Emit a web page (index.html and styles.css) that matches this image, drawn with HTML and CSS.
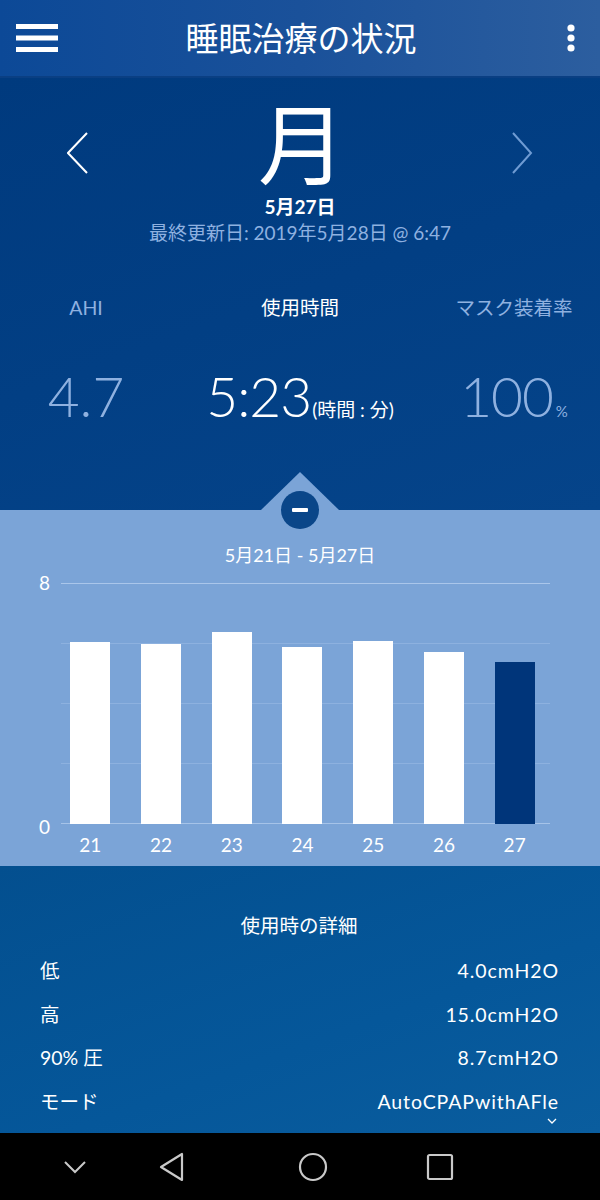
FILE: index.html
```html
<!DOCTYPE html>
<html lang="ja">
<head>
<meta charset="utf-8">
<title>睡眠治療の状況</title>
<link rel="stylesheet" href="styles.css">
</head>
<body>
<div class="screen">
  <header class="appbar">
    <svg class="menu" width="42" height="29" viewBox="0 0 42 29"><rect x="0" y="0" width="42" height="5" fill="#fff"/><rect x="0" y="11.5" width="42" height="5" fill="#fff"/><rect x="0" y="23" width="42" height="5" fill="#fff"/></svg>
    <h1 class="title">睡眠治療の状況</h1>
    <svg class="kebab" width="10" height="28" viewBox="0 0 10 28"><circle cx="5" cy="4" r="3.6" fill="#fff"/><circle cx="5" cy="14" r="3.6" fill="#fff"/><circle cx="5" cy="24" r="3.6" fill="#fff"/></svg>
  </header>

  <section class="summary">
    <div class="day-row">
      <svg class="chev" width="22" height="42" viewBox="0 0 22 42"><polyline points="20,1 1,21 20,41" fill="none" stroke="#ffffff" stroke-width="2"/></svg>
      <div class="day">月</div>
      <svg class="chev" width="22" height="42" viewBox="0 0 22 42"><polyline points="2,1 20,21 2,41" fill="none" stroke="#6f9bd3" stroke-width="2"/></svg>
    </div>
    <div class="date">5月27日</div>
    <div class="updated">最終更新日: 2019年5月28日 @ 6:47</div>

    <div class="stats">
      <div class="stat-label dim">AHI</div>
      <div class="stat-label">使用時間</div>
      <div class="stat-label dim">マスク装着率</div>
      <div class="stat-value dim">4.7</div>
      <div class="stat-value"><span class="big">5:23</span><span class="unit">(時間 : 分)</span></div>
      <div class="stat-value dim"><span class="big">100</span><span class="pct">%</span></div>
    </div>
  </section>

  <section class="weekly">
    <div class="collapse"><span class="dash"></span></div>
    <div class="range">5月21日 - 5月27日</div>
    <div class="chart">
      <div class="yaxis"><span>8</span><span>0</span></div>
      <div class="plot">
        <div class="bars">
          <div class="col"><div class="bar" style="height:182px"></div></div>
          <div class="col"><div class="bar" style="height:180px"></div></div>
          <div class="col"><div class="bar" style="height:192px"></div></div>
          <div class="col"><div class="bar" style="height:177px"></div></div>
          <div class="col"><div class="bar" style="height:183px"></div></div>
          <div class="col"><div class="bar" style="height:172px"></div></div>
          <div class="col"><div class="bar current" style="height:162px"></div></div>
        </div>
      </div>
    </div>
    <div class="xaxis">
      <span>21</span><span>22</span><span>23</span><span>24</span><span>25</span><span>26</span><span>27</span>
    </div>
  </section>

  <section class="details">
    <div class="details-title">使用時の詳細</div>
    <div class="row"><span>低</span><span class="val">4.0cmH2O</span></div>
    <div class="row"><span>高</span><span class="val">15.0cmH2O</span></div>
    <div class="row"><span>90% 圧</span><span class="val">8.7cmH2O</span></div>
    <div class="row"><span>モード</span><span class="val">AutoCPAPwithAFle</span></div>
    <div class="more"><svg width="10" height="6" viewBox="0 0 10 6"><polyline points="1,1 5,5 9,1" fill="none" stroke="#fff" stroke-width="1.3"/></svg></div>
  </section>

  <nav class="sysnav">
    <svg class="nv n1" width="24" height="14" viewBox="0 0 24 14"><polyline points="2,2 12,12 22,2" fill="none" stroke="#c9c9c9" stroke-width="2"/></svg>
    <svg class="nv n2" width="26" height="30" viewBox="0 0 26 30"><path d="M23,2 L23,28 L2,15 Z" fill="none" stroke="#c9c9c9" stroke-width="2.2" stroke-linejoin="round"/></svg>
    <svg class="nv n3" width="30" height="30" viewBox="0 0 30 30"><circle cx="15" cy="15" r="13" fill="none" stroke="#c9c9c9" stroke-width="2.2"/></svg>
    <svg class="nv n4" width="28" height="28" viewBox="0 0 28 28"><rect x="2" y="2" width="24" height="24" rx="1.5" fill="none" stroke="#c9c9c9" stroke-width="2.2"/></svg>
  </nav>
</div>
</body>
</html>
```

FILE: styles.css
```css
* { box-sizing: border-box; margin: 0; padding: 0; }

body {
  margin: 0;
  width: 600px;
  height: 1200px;
  overflow: hidden;
  font-family: "Lato", "Noto Sans CJK JP", sans-serif;
  color: #fff;
  background: #000;
}

.screen {
  width: 600px;
  height: 1200px;
  display: flex;
  flex-direction: column;
}

/* App bar */
.appbar {
  height: 78px;
  flex: none;
  display: flex;
  align-items: center;
  padding: 0 24px 0 16px;
  background: linear-gradient(90deg, #0c4997 0%, #1a519a 50%, #2c5e9f 100%);
  border-bottom: 2px solid #0a3f83;
}
.menu { flex: none; }
.title {
  flex: 1;
  text-align: center;
  font-family: "Noto Sans CJK JP", sans-serif;
  font-weight: 400;
  font-size: 33px;
  line-height: 40px;
  margin-right: 22px;
  margin-top: -3px;
}
.kebab { flex: none; }

/* Summary */
.summary {
  height: 432px;
  flex: none;
  background: linear-gradient(160deg, #003a7e 0%, #023f84 50%, #05448a 100%);
  padding-top: 11px;
  text-align: center;
}
.day-row {
  height: 100px;
  display: flex;
  align-items: center;
  justify-content: space-between;
  padding: 0 67px 0 67px;
}
.chev { flex: none; margin-top: 28px; }
.day {
  font-family: "Noto Sans CJK JP", sans-serif;
  font-size: 88px;
  line-height: 88px;
  margin-left: 4px;
}
.date {
  font-weight: 700;
  font-size: 19px;
  line-height: 24px;
  margin-top: 6px;
}
.updated {
  font-size: 19px;
  line-height: 28px;
  color: #8fb1e0;
}

.stats {
  display: grid;
  grid-template-columns: 172px 256px 172px;
  margin-top: 47px;
}
.stat-label {
  font-size: 19.5px;
  line-height: 28px;
}
.dim { color: #8fb1e0; }
.stat-value {
  margin-top: 39px;
  line-height: 70px;
  font-size: 55px;
  font-weight: 300;
  white-space: nowrap;
}
.stat-value .big { font-weight: 300; letter-spacing: -1px; }
.unit { font-size: 19px; font-weight: 400; margin-left: 1px; }
.pct { font-size: 15px; font-weight: 400; margin-left: 3px; }

/* Weekly chart */
.weekly {
  position: relative;
  height: 356px;
  flex: none;
  background: #7ba4d7;
}
.weekly::before {
  content: "";
  position: absolute;
  left: 261px;
  top: -38px;
  width: 0;
  height: 0;
  border-left: 39px solid transparent;
  border-right: 39px solid transparent;
  border-bottom: 38px solid #7ba4d7;
}
.collapse {
  position: absolute;
  left: 281px;
  top: -19px;
  width: 38px;
  height: 38px;
  border-radius: 50%;
  background: #0a4689;
  display: flex;
  align-items: center;
  justify-content: center;
}
.dash {
  width: 16px;
  height: 4px;
  border-radius: 1px;
  background: #fff;
}
.range {
  padding-top: 32px;
  font-size: 18px;
  line-height: 26px;
  text-align: center;
}
.chart {
  display: flex;
  margin-top: 15px;
}
.yaxis {
  width: 61px;
  flex: none;
  height: 241px;
  display: flex;
  flex-direction: column;
  justify-content: space-between;
  padding-right: 11px;
  text-align: right;
}
.yaxis span {
  font-size: 19px;
  line-height: 24px;
  margin: -12px 0;
}
.yaxis span:last-child { margin-bottom: -15px; }
.plot {
  width: 489px;
  height: 241px;
  border-top: 1px solid #aac6ea;
  border-bottom: 1px solid #a6c3e8;
  background: repeating-linear-gradient(to bottom, transparent 0 59px, #8db1df 59px 60px);
}
.bars {
  margin-left: -6px;
  width: 495px;
  height: 100%;
  display: grid;
  grid-template-columns: repeat(7, 1fr);
  align-items: end;
}
.col {
  display: flex;
  justify-content: center;
  align-items: flex-end;
  height: 100%;
}
.bar {
  width: 40px;
  background: #ffffff;
  margin-bottom: -1px;
}
.bar.current {
  background: #00357a;
}
.xaxis {
  margin-left: 55px;
  width: 495px;
  display: grid;
  grid-template-columns: repeat(7, 1fr);
  text-align: center;
  font-size: 19px;
  line-height: 24px;
  margin-top: 9px;
}

/* Details */
.details {
  height: 267px;
  flex: none;
  overflow: hidden;
  background: linear-gradient(160deg, #034f8f 0%, #05579a 60%, #0a5d9e 100%);
  padding: 46px 42px 0 40px;
}
.details-title {
  text-align: center;
  font-size: 19.5px;
  line-height: 28px;
  margin-bottom: 17px;
}
.row {
  height: 43.5px;
  display: flex;
  justify-content: space-between;
  font-size: 19.5px;
  line-height: 28px;
}
.val { letter-spacing: 0.9px; margin-right: -1px; }
.more {
  display: flex;
  justify-content: flex-end;
  margin-top: -13px;
  padding-right: 1px;
}

/* System nav */
.sysnav {
  flex: 1;
  background: #000;
  display: flex;
  align-items: center;
}
.n1 { margin-left: 63px; }
.n2 { margin-left: 72px; }
.n3 { margin-left: 113px; }
.n4 { margin-left: 98px; }
```
